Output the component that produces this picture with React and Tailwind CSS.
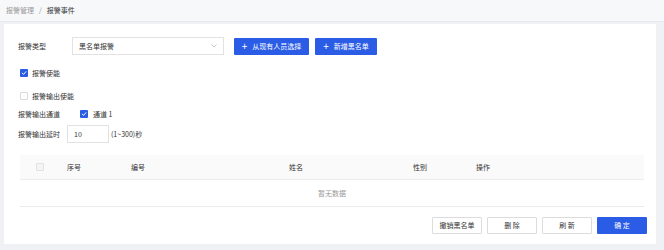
import React from "react";

const font = { fontFamily: '"Noto Sans CJK SC", "Noto Sans", sans-serif' };

function Check({ checked }) {
  if (checked) {
    return (
      <span className="flex h-[8px] w-[8px] items-center justify-center rounded-[1px] bg-[#2a5ce6]">
        <svg width="6" height="6" viewBox="0 0 10 10" fill="none">
          <path d="M2 5.2 L4.2 7.4 L8.2 2.8" stroke="#fff" strokeWidth="1.6" strokeLinecap="round" strokeLinejoin="round" />
        </svg>
      </span>
    );
  }
  return <span className="block h-[8px] w-[8px] rounded-[1px] border border-[#d9d9d9] bg-white" />;
}

function Btn({ children, primary }) {
  return (
    <button
      className={
        primary
          ? "flex h-[17px] w-[50px] items-center justify-center rounded-[1px] bg-[#2a5ce6] text-[7px] text-white"
          : "flex h-[17px] w-[50px] items-center justify-center rounded-[1px] border border-[#dcdcdc] bg-white text-[7px] text-[#333]"
      }
    >
      {children}
    </button>
  );
}

export default function App() {
  return (
    <div className="flex h-[250px] w-[664px] flex-col bg-[#f0f1f5] text-[7px] text-[#333]" style={font}>
      <div className="flex h-[22px] items-center border-b border-[#e8e9ee] bg-[#f7f8fa] pl-[6px]">
        <span className="text-[#999]">报警管理</span>
        <span className="mx-[5px] text-[#999]">/</span>
        <span className="text-[#333]">报警事件</span>
      </div>
      <div className="ml-[4px] mr-[8px] mt-[2px] flex h-[220px] flex-col bg-white pt-[13px] pl-[14px] pr-[9px]">
        <div className="flex h-[18px] items-center">
          <span className="w-[54px]">报警类型</span>
          <div className="flex h-[18px] w-[152px] items-center justify-between border border-[#e2e2e2] pl-[6px] pr-[6px]">
            <span>黑名单报警</span>
            <svg width="6" height="4" viewBox="0 0 6 4" fill="none">
              <path d="M0.5 0.5 L3 3 L5.5 0.5" stroke="#bbb" strokeWidth="0.8" />
            </svg>
          </div>
          <button className="ml-[10px] flex h-[17px] w-[75px] items-center justify-center gap-[5px] rounded-[1px] bg-[#2a5ce6] text-[7px] text-white">
            <span className="text-[10px] leading-none">+</span>
            <span>从现有人员选择</span>
          </button>
          <button className="ml-[6px] flex h-[17px] w-[62px] items-center justify-center gap-[5px] rounded-[1px] bg-[#2a5ce6] text-[7px] text-white">
            <span className="text-[10px] leading-none">+</span>
            <span>新增黑名单</span>
          </button>
        </div>
        <div className="mt-[12px] flex h-[12px] items-center gap-[4px] pl-[2px]">
          <Check checked />
          <span>报警使能</span>
        </div>
        <div className="mt-[11px] flex h-[12px] items-center gap-[4px] pl-[2px]">
          <Check />
          <span>报警输出使能</span>
        </div>
        <div className="mt-[6px] flex h-[12px] items-center">
          <span className="w-[62px]">报警输出通道</span>
          <Check checked />
          <span className="ml-[5px]">通道 1</span>
        </div>
        <div className="mt-[5px] flex h-[18px] items-center">
          <span className="w-[49px]">报警输出延时</span>
          <div className="flex h-[18px] w-[42px] items-center border border-[#e2e2e2] pl-[6px]">10</div>
          <span className="ml-[2px]">(1~300)秒</span>
        </div>
        <div className="mt-[12px] ml-[2px] w-[624px]">
          <div className="grid h-[25px] grid-cols-[40px_64px_158px_124px_63px_175px] items-center border-b border-[#ececec] bg-[#fafafa]">
            <div className="flex justify-center">
              <span className="block h-[8px] w-[8px] rounded-[1px] border border-[#e2e2e2] bg-[#f5f5f5]" />
            </div>
            <div className="pl-[7px]">序号</div>
            <div className="pl-[7px]">编号</div>
            <div className="pl-[7px]">姓名</div>
            <div className="pl-[7px]">性别</div>
            <div className="pl-[7px]">操作</div>
          </div>
          <div className="flex h-[27px] items-center justify-center border-b border-[#ececec] text-[#999]">暂无数据</div>
        </div>
        <div className="mt-[10px] flex justify-end gap-[5px]">
          <Btn>撤销黑名单</Btn>
          <Btn>删 除</Btn>
          <Btn>刷 新</Btn>
          <Btn primary>确 定</Btn>
        </div>
      </div>
    </div>
  );
}
